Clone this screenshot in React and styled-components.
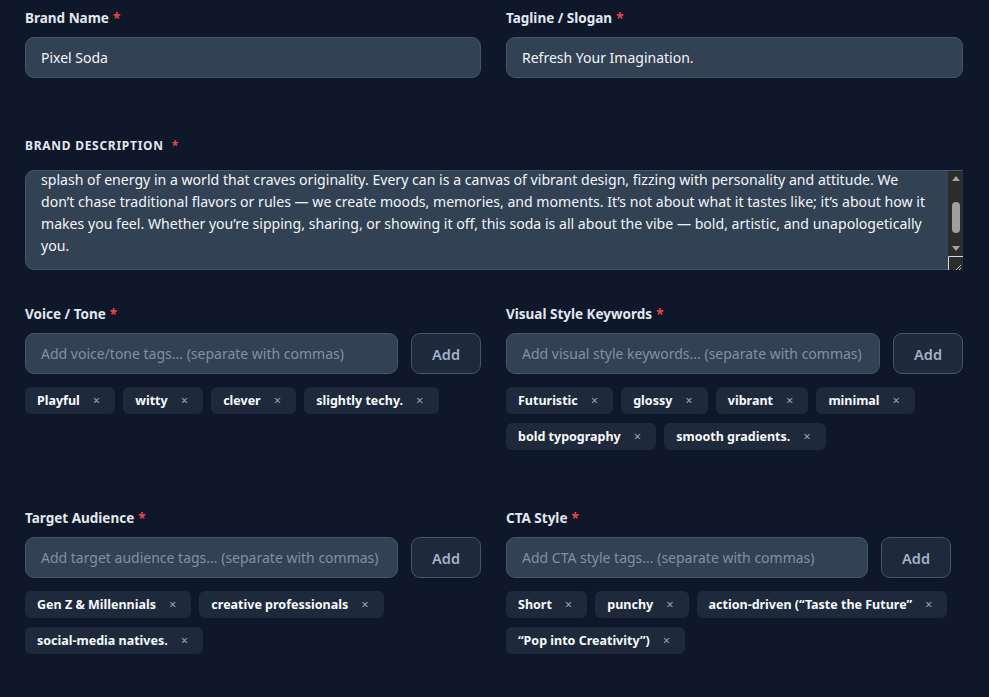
import React, { useLayoutEffect, useRef } from 'react';
import styled, { createGlobalStyle } from 'styled-components';

const GlobalStyle = createGlobalStyle`
  html, body {
    margin: 0;
    padding: 0;
    background: #0f172a;
  }
  body {
    font-family: "Noto Sans", "Open Sans", "Liberation Sans", sans-serif;
    color: #f1f5f9;
  }
  * { box-sizing: border-box; }
`;

// the first paragraph sits above the scrolled view
const description =
  'Pixel Soda is a bold, futuristic soft drink brand made for the dreamers, creators, and trendsetters who see the world a little differently. Born at the intersection of pop art and digital culture, every sip is a burst of flavor and color that sparks imagination and fuels self-expression. It’s more than a drink — it’s a statement, a mood, a lifestyle, and a\n' +
  'splash of energy in a world that craves originality. Every can is a canvas of vibrant design, fizzing with personality and attitude. We don’t chase traditional flavors or rules — we create moods, memories, and moments. It’s not about what it tastes like; it’s about how it makes you feel. Whether you’re sipping, sharing, or showing it off, this soda is all about the vibe — bold, artistic, and unapologetically you.';

const Page = styled.div`
  padding: 8px 26px 40px 25px;
  min-height: 697px;
`;

const Row = styled.div`
  display: grid;
  grid-template-columns: 456px 1fr;
  column-gap: 25px;
  margin-top: ${(p) => p.$top || 0}px;
`;

const Field = styled.div`
  display: flex;
  flex-direction: column;
  min-width: 0;
  margin-top: ${(p) => p.$top || 0}px;
`;

const Label = styled.label`
  display: block;
  height: 20px;
  line-height: 20px;
  margin-bottom: ${(p) => (p.$caps ? 14 : 9)}px;
  font-size: ${(p) => (p.$caps ? 12 : 13.5)}px;
  font-weight: 700;
  color: #e2e8f0;
  letter-spacing: ${(p) => (p.$caps ? '0.06em' : '0')};
  text-transform: ${(p) => (p.$caps ? 'uppercase' : 'none')};
`;

const Star = styled.span`
  color: #ef4444;
  margin-left: ${(p) => (p.$wide ? 8 : 4)}px;
`;

const TextInput = styled.input`
  width: 100%;
  height: 41px;
  padding: 0 15px;
  border: 1px solid #475569;
  border-radius: 9px;
  background: #334155;
  color: #f1f5f9;
  font-family: inherit;
  font-size: 14px;
  outline: none;
  min-width: 0;

  &::placeholder {
    color: #8190a6;
  }
`;

const DescBox = styled.div`
  position: relative;
`;

const TextArea = styled.textarea`
  display: block;
  width: 100%;
  height: 100px;
  padding: 12px 31px 12px 15px;
  border: 1px solid #475569;
  border-radius: 9px 0 0 9px;
  background: #334155;
  color: #f1f5f9;
  font-family: inherit;
  font-size: 14.1px;
  line-height: 22px;
  outline: none;
  overflow: hidden;
  resize: none;
`;

const ScrollTrack = styled.div`
  position: absolute;
  top: 1px;
  right: 0;
  bottom: 0;
  width: 15px;
  display: flex;
  flex-direction: column;
  background: #2c2c2c;
`;

const Arrow = styled.div`
  height: 15px;
  display: flex;
  align-items: center;
  justify-content: center;

  &::before {
    content: '';
    border-left: 4px solid transparent;
    border-right: 4px solid transparent;
    ${(p) => (p.$down ? 'border-top' : 'border-bottom')}: 5px solid #a3a3a3;
  }
`;

const ThumbArea = styled.div`
  flex: 1;
  display: flex;
  justify-content: center;
  padding-top: 16px;
`;

const Thumb = styled.div`
  width: 8px;
  height: 31px;
  border-radius: 4px;
  background: #9f9f9f;
`;

const Resizer = styled.div`
  height: 14px;
  display: flex;
`;

const AddRow = styled.div`
  display: flex;
  gap: 13px;
  width: ${(p) => p.$width || '100%'};
`;

const AddButton = styled.button`
  flex: none;
  height: 41px;
  padding: 0 20px;
  border: 1px solid #475569;
  border-radius: 9px;
  background: #1e293b;
  color: #a3b1c6;
  font-family: inherit;
  font-size: 14.5px;
  font-weight: 600;
  cursor: pointer;
`;

const Tags = styled.div`
  display: flex;
  flex-wrap: wrap;
  gap: 9px 8px;
  margin-top: 13px;
`;

const Tag = styled.span`
  display: inline-flex;
  align-items: center;
  height: 27px;
  padding: 0 10px 0 12px;
  border-radius: 6px;
  background: #1e293b;
  color: #f8fafc;
  font-size: 12.5px;
  font-weight: 700;
`;

const Remove = styled.button`
  border: none;
  background: none;
  padding: 0 5px;
  margin-left: 8px;
  color: #94a3b8;
  font-family: inherit;
  font-size: 13px;
  line-height: 1;
  cursor: pointer;
`;

const TagField = ({ label, placeholder, tags, rowWidth }) => (
  <Field>
    <Label>
      {label}
      <Star>*</Star>
    </Label>
    <AddRow $width={rowWidth}>
      <TextInput placeholder={placeholder} />
      <AddButton>Add</AddButton>
    </AddRow>
    <Tags>
      {tags.map((t) => (
        <Tag key={t}>
          {t}
          <Remove aria-label={`Remove ${t}`}>×</Remove>
        </Tag>
      ))}
    </Tags>
  </Field>
);

export default function App() {
  const areaRef = useRef(null);

  useLayoutEffect(() => {
    if (areaRef.current) areaRef.current.scrollTop = areaRef.current.scrollHeight;
  }, []);

  return (
    <Page>
      <GlobalStyle />
      <Row>
        <Field>
          <Label>
            Brand Name<Star>*</Star>
          </Label>
          <TextInput defaultValue='Pixel Soda' />
        </Field>
        <Field>
          <Label>
            Tagline / Slogan<Star>*</Star>
          </Label>
          <TextInput defaultValue='Refresh Your Imagination.' />
        </Field>
      </Row>

      <Field $top={58}>
        <Label $caps>
          Brand Description<Star $wide>*</Star>
        </Label>
        <DescBox>
          <TextArea ref={areaRef} defaultValue={description} />
          <ScrollTrack>
            <Arrow />
            <ThumbArea>
              <Thumb />
            </ThumbArea>
            <Arrow $down />
            <Resizer>
              <svg width='15' height='14' viewBox='0 0 15 14'>
                <path d='M0.5 14V0.5H15' fill='none' stroke='#d9d9d9' strokeWidth='1' />
                <path d='M13 9L8 14M13 12L11 14' stroke='#bdbdbd' strokeWidth='1' />
              </svg>
            </Resizer>
          </ScrollTrack>
        </DescBox>
      </Field>

      <Row $top={34}>
        <TagField
          label='Voice / Tone'
          placeholder='Add voice/tone tags... (separate with commas)'
          tags={['Playful', 'witty', 'clever', 'slightly techy.']}
        />
        <TagField
          label='Visual Style Keywords'
          placeholder='Add visual style keywords... (separate with commas)'
          tags={['Futuristic', 'glossy', 'vibrant', 'minimal', 'bold typography', 'smooth gradients.']}
        />
      </Row>

      <Row $top={58}>
        <TagField
          label='Target Audience'
          placeholder='Add target audience tags... (separate with commas)'
          tags={['Gen Z & Millennials', 'creative professionals', 'social-media natives.']}
        />
        <TagField
          label='CTA Style'
          placeholder='Add CTA style tags... (separate with commas)'
          rowWidth='445px'
          tags={['Short', 'punchy', 'action-driven (“Taste the Future”', '“Pop into Creativity”)']}
        />
      </Row>
    </Page>
  );
}
